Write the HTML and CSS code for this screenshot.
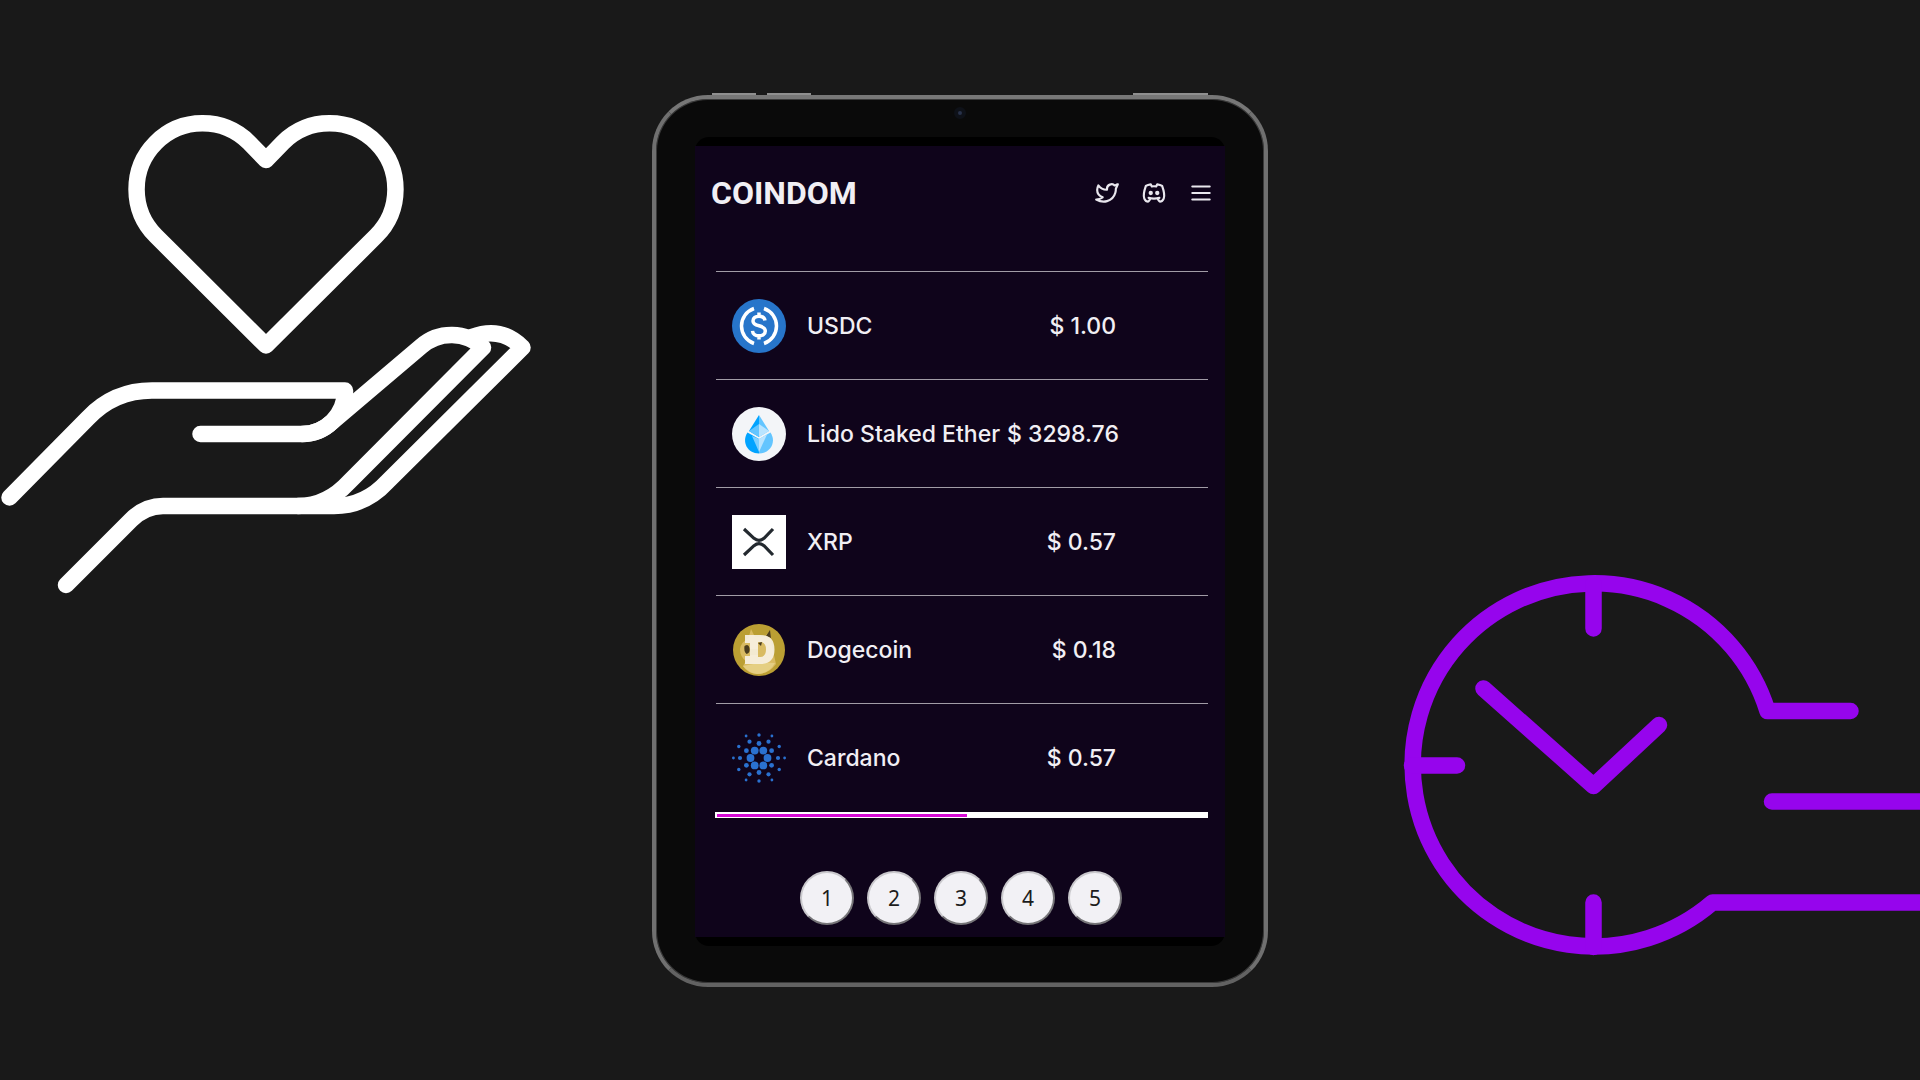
FILE: index.html
```
<!DOCTYPE html>
<html lang="en">
<head>
<meta charset="utf-8">
<meta name="viewport" content="width=device-width, initial-scale=1">
<title>Coindom</title>
<link rel="stylesheet" href="styles.css">
</head>
<body>
<main class="stage">
  <svg class="art art-care" viewBox="0 0 540 510" fill="none" aria-hidden="true">
    <path d="M266 255.500L156 146A65 65 0 1 1 249 52.500L266 70L283 52.500A65 65 0 1 1 376 146Z"/>
    <path d="M9.500 407.500L88 328Q114 300.500 152 300.500H345A43 43 0 0 1 302 344H200.500"/>
    <path d="M302 344Q319 344 332 332L421 256.500A46 46 0 0 1 483 257.500L349 392Q327 416 298 416"/>
    <path d="M472 247Q501 236 522.500 257.500L387 392Q365 416 334 416H163Q145 416 131 430L66 495"/>
  </svg>

  <section class="tablet" aria-label="Coindom on a tablet">
    <div class="keys"><i></i><i></i><i class="power"></i></div>
    <div class="frame">
      <div class="camera"></div>
      <div class="screen">
        <div class="app">
          <header class="top">
            <h1 class="brand">COINDOM</h1>
            <nav class="links">
              <a href="#" aria-label="Twitter"><svg viewBox="0 0 24 24"><path d="M22 4.010c-1 .49-1.980.689-3 .990-1.121-1.265-2.783-1.335-4.380-.737S11.977 6.323 12 8v1c-3.245.083-6.135-1.395-8-4 0 0-4.182 7.433 4 11-1.872 1.247-3.739 2.088-6 2 3.308 1.803 6.913 2.423 10.034 1.517 3.580-1.040 6.522-3.723 7.651-7.742a13.840 13.840 0 0 0 .497-3.753c0-.249 1.510-2.772 1.818-4.013z"/></svg></a>
              <a href="#" aria-label="Discord"><svg viewBox="0 0 24 24"><circle class="eye" cx="9" cy="12" r="2"/><circle class="eye" cx="15" cy="12" r="2"/><path d="M15.500 17c0 1 1.500 3 2 3 1.500 0 2.833-1.667 3.500-3 .667-1.667.5-5.833-1.500-11.500-1.457-1.015-3-1.340-4.500-1.500l-.972 1.923a11.913 11.913 0 0 0-4.053 0L9 4c-1.500.16-3.043.485-4.500 1.500C2.500 11.167 2.333 15.333 3 17c.667 1.333 2 3 3.500 3 .5 0 2-2 2-3M7 16.500c3.500 1 6.500 1 10 0"/></svg></a>
              <button type="button" aria-label="Menu"><svg viewBox="0 0 24 24"><path d="M4 6h16M4 12h16M4 18h16"/></svg></button>
            </nav>
          </header>

          <table class="coins">
            <tbody>
              <tr>
                <td class="logo"><svg viewBox="0 0 54 54"><circle cx="27" cy="27" r="27" fill="#2775ca"/><g fill="none" stroke="#fff" stroke-width="3.500"><path d="M22 9.500a18.500 18.500 0 0 0 0 35M32 9.500a18.500 18.500 0 0 1 0 35"/><path d="M33 21.500c-.5-3-3-4.300-6-4.300-3.500 0-6 1.800-6 4.700 0 6.600 12.300 3.200 12.300 10 0 3-2.800 4.900-6.300 4.900s-6.300-1.800-6.500-5M27 13.500v4M27 36.500v4"/></g></svg></td>
                <th scope="row">USDC</th>
                <td class="price">$ 1.00</td>
              </tr>
              <tr>
                <td class="logo"><svg viewBox="0 0 54 54"><circle cx="27" cy="27" r="27" fill="#f3f5f8"/><path fill="#00a3ff" d="M27 8L17 24l10 6z"/><path fill="#63c5ff" d="M27 8l10 16-10 6z"/><path fill="#b9e4ff" d="M27 17l10 7-10 6z"/><path fill="#63c5ff" d="M27 17l-10 7 10 6z"/><path fill="#00a3ff" d="M15.500 25.500L27 32v14.500c-12 0-17.500-12-11.500-21z"/><path fill="#63c5ff" d="M38.500 25.500L27 32v14.500c12 0 17.500-12 11.500-21z"/><path fill="#7fd0ff" d="M27 32v13l-7-16z"/><path fill="#b9e4ff" d="M27 32v13l8-17.500z"/></svg></td>
                <th scope="row">Lido Staked Ether</th>
                <td class="price">$ 3298.76</td>
              </tr>
              <tr>
                <td class="logo"><svg viewBox="0 0 54 54"><rect width="54" height="54" fill="#fff"/><path fill="none" stroke="#23292f" stroke-width="3.200" d="M12 14l10 9.300q5 4 10 0l9-9.300M12 40l10-9.300q5-4 10 0l9 9.300"/></svg></td>
                <th scope="row">XRP</th>
                <td class="price">$ 0.57</td>
              </tr>
              <tr>
                <td class="logo"><svg viewBox="0 0 54 54"><circle cx="27" cy="27" r="26" fill="#bb9f33"/><path fill="#d9bb62" d="M16 17l3-11 4 8h9l6-6 1 11 5 22q-7 10-19 10-10-1-14-8l3-5q-6-4-6-12 1-7 8-10z"/><path fill="#e5cf83" d="M11 43q15-4 32-3-6 11-18 11-8-1-14-8z"/><path fill="#4a3c1e" d="M34 13l4-6 1 8z"/><path fill="#f7f1e2" fill-opacity=".93" fill-rule="evenodd" d="M13 12h15q14.500 0 14.500 14.500T28 41H13v-8h5V20h-5zm13 7v15h2q6 0 6-7.500T28 19z"/><path fill="#4a3c1e" d="M12.500 23q4-3 5 2t-3 6q-3-3-2-8zM26 20l4-1-1 4z"/><path fill="#f3ead2" d="M18 26h8v6h-8z"/></svg></td>
                <th scope="row">Dogecoin</th>
                <td class="price">$ 0.18</td>
              </tr>
              <tr>
                <td class="logo"><svg viewBox="0 0 54 54" fill="#2a71d0"><g><circle cx="35.500" cy="27" r="3.900"/><circle cx="31.300" cy="34.400" r="3.900"/><circle cx="22.700" cy="34.400" r="3.900"/><circle cx="18.500" cy="27" r="3.900"/><circle cx="22.700" cy="19.600" r="3.900"/><circle cx="31.300" cy="19.600" r="3.900"/></g><g><circle cx="27" cy="12.500" r="2.400"/><circle cx="39.600" cy="19.700" r="2.400"/><circle cx="39.600" cy="34.300" r="2.400"/><circle cx="27" cy="41.500" r="2.400"/><circle cx="14.400" cy="34.300" r="2.400"/><circle cx="14.400" cy="19.700" r="2.400"/></g><g><circle cx="46" cy="27" r="2.100"/><circle cx="36.500" cy="43.300" r="2.100"/><circle cx="17.500" cy="43.300" r="2.100"/><circle cx="8" cy="27" r="2.100"/><circle cx="17.500" cy="10.700" r="2.100"/><circle cx="36.500" cy="10.700" r="2.100"/></g><g><circle cx="27" cy="4" r="1.700"/><circle cx="47.200" cy="15.500" r="1.700"/><circle cx="47.200" cy="38.500" r="1.700"/><circle cx="27" cy="50" r="1.700"/><circle cx="6.800" cy="38.500" r="1.700"/><circle cx="6.800" cy="15.500" r="1.700"/></g><g><circle cx="52.600" cy="27" r="1.400"/><circle cx="39.900" cy="49" r="1.400"/><circle cx="14.100" cy="49" r="1.400"/><circle cx="1.400" cy="27" r="1.400"/><circle cx="14.100" cy="5" r="1.400"/><circle cx="39.900" cy="5" r="1.400"/></g></svg></td>
                <th scope="row">Cardano</th>
                <td class="price">$ 0.57</td>
              </tr>
            </tbody>
          </table>
          <div class="track"><div class="thumb"></div></div>

          <nav class="pages" aria-label="Pages">
            <button type="button">1</button>
            <button type="button">2</button>
            <button type="button">3</button>
            <button type="button">4</button>
            <button type="button">5</button>
          </nav>
        </div>
      </div>
    </div>
  </section>

  <svg class="art art-clock" viewBox="0 0 520 400" fill="none" aria-hidden="true">
    <path d="M450.500 151H367.500A181.500 181.500 0 1 0 312.500 342.500H530"/>
    <path d="M193.500 24V68.500M12 205.500H57M193.500 387V342.500"/>
    <path d="M83.500 128.500L193.500 226L259 165M372 241.500H530"/>
  </svg>
</main>
</body>
</html>
```
FILE: styles.css
```
* {
  box-sizing: border-box;
}

body {
  margin: 0;
  background: #191919;
  color: #f1eff4;
  font-family: Inter, "Liberation Sans", sans-serif;
}

.stage {
  display: grid;
  grid-template-columns: 1fr 616px 1fr;
  min-height: 100vh;
  align-items: center;
  overflow: hidden;
}

.art {
  display: block;
  stroke-width: 16.500px;
  stroke-linecap: round;
  stroke-linejoin: round;
}

.art-care {
  width: 540px;
  stroke: #fff;
  align-self: start;
  margin-top: 90px;
}

.art-clock {
  width: 520px;
  stroke: #9605ed;
  justify-self: end;
  align-self: end;
  margin-bottom: 120px;
}

/* Tablet body */
.keys {
  display: flex;
  gap: 11px;
  padding: 0 60px;
}

.keys i {
  width: 44px;
  height: 2px;
  background: #8f8f8f;
}

.keys .power {
  width: 75px;
  margin-left: auto;
}

.frame {
  border: 4px solid;
  border-color: #777 #707070 #626262;
  border-radius: 56px;
  background: #0a0a0a;
  padding: 0 39px 37px;
  box-shadow: inset 0 0 0 1px #3a3a3a;
}

.camera {
  width: 12px;
  height: 12px;
  margin: 8px auto 18px;
  border: 4px solid #0e1118;
  border-radius: 50%;
  background: #28324a;
}

.screen {
  padding: 9px 0;
  border-radius: 14px;
  background: #000;
}

.app {
  background: #0f041b;
  padding-bottom: 12px;
}

.top {
  display: flex;
  align-items: center;
  justify-content: space-between;
  height: 98px;
  padding: 0 11px 4px 16px;
}

.brand {
  margin: 0;
  font: 700 32px/40px Roboto, "Liberation Sans", sans-serif;
}

.links {
  display: flex;
  gap: 21px;
}

.links a,
.links button {
  display: block;
  padding: 0;
  border: 0;
  background: none;
  color: #e9e7ee;
}

.links svg {
  display: block;
  width: 26px;
  height: 26px;
  fill: none;
  stroke: currentColor;
  stroke-width: 2;
  stroke-linecap: round;
  stroke-linejoin: round;
}

.links .eye {
  fill: currentColor;
  stroke: none;
}

/* Coin list */
.coins {
  width: 492px;
  margin: 27px 0 0 21px;
  border-collapse: collapse;
  table-layout: fixed;
  font-size: 23px;
  line-height: 28px;
}

.coins tr {
  height: 108px;
  border-top: 1px solid #a19ca6;
}

.coins td,
.coins th {
  padding: 0;
  font-weight: 500;
  text-align: left;
  white-space: nowrap;
}

.coins .logo {
  width: 91px;
  padding-left: 16px;
}

.logo svg {
  display: block;
  width: 54px;
  height: 54px;
}

.coins .price {
  width: 201px;
  padding-right: 92px;
  text-align: right;
}

.track {
  width: 493px;
  height: 6px;
  margin-left: 20px;
  padding: 2px;
  background: #fff;
}

.thumb {
  width: 250px;
  height: 3px;
  background: #d60bd6;
}

.pages {
  display: flex;
  justify-content: center;
  gap: 13px;
  margin-top: 53px;
  padding-left: 2px;
}

.pages button {
  width: 54px;
  height: 54px;
  padding: 0;
  border: 2px outset #c9c8cc;
  border-radius: 50%;
  background: #f2f1f5;
  color: #1c1c1c;
  font: 21px/28px "Noto Sans", sans-serif;
}
```
